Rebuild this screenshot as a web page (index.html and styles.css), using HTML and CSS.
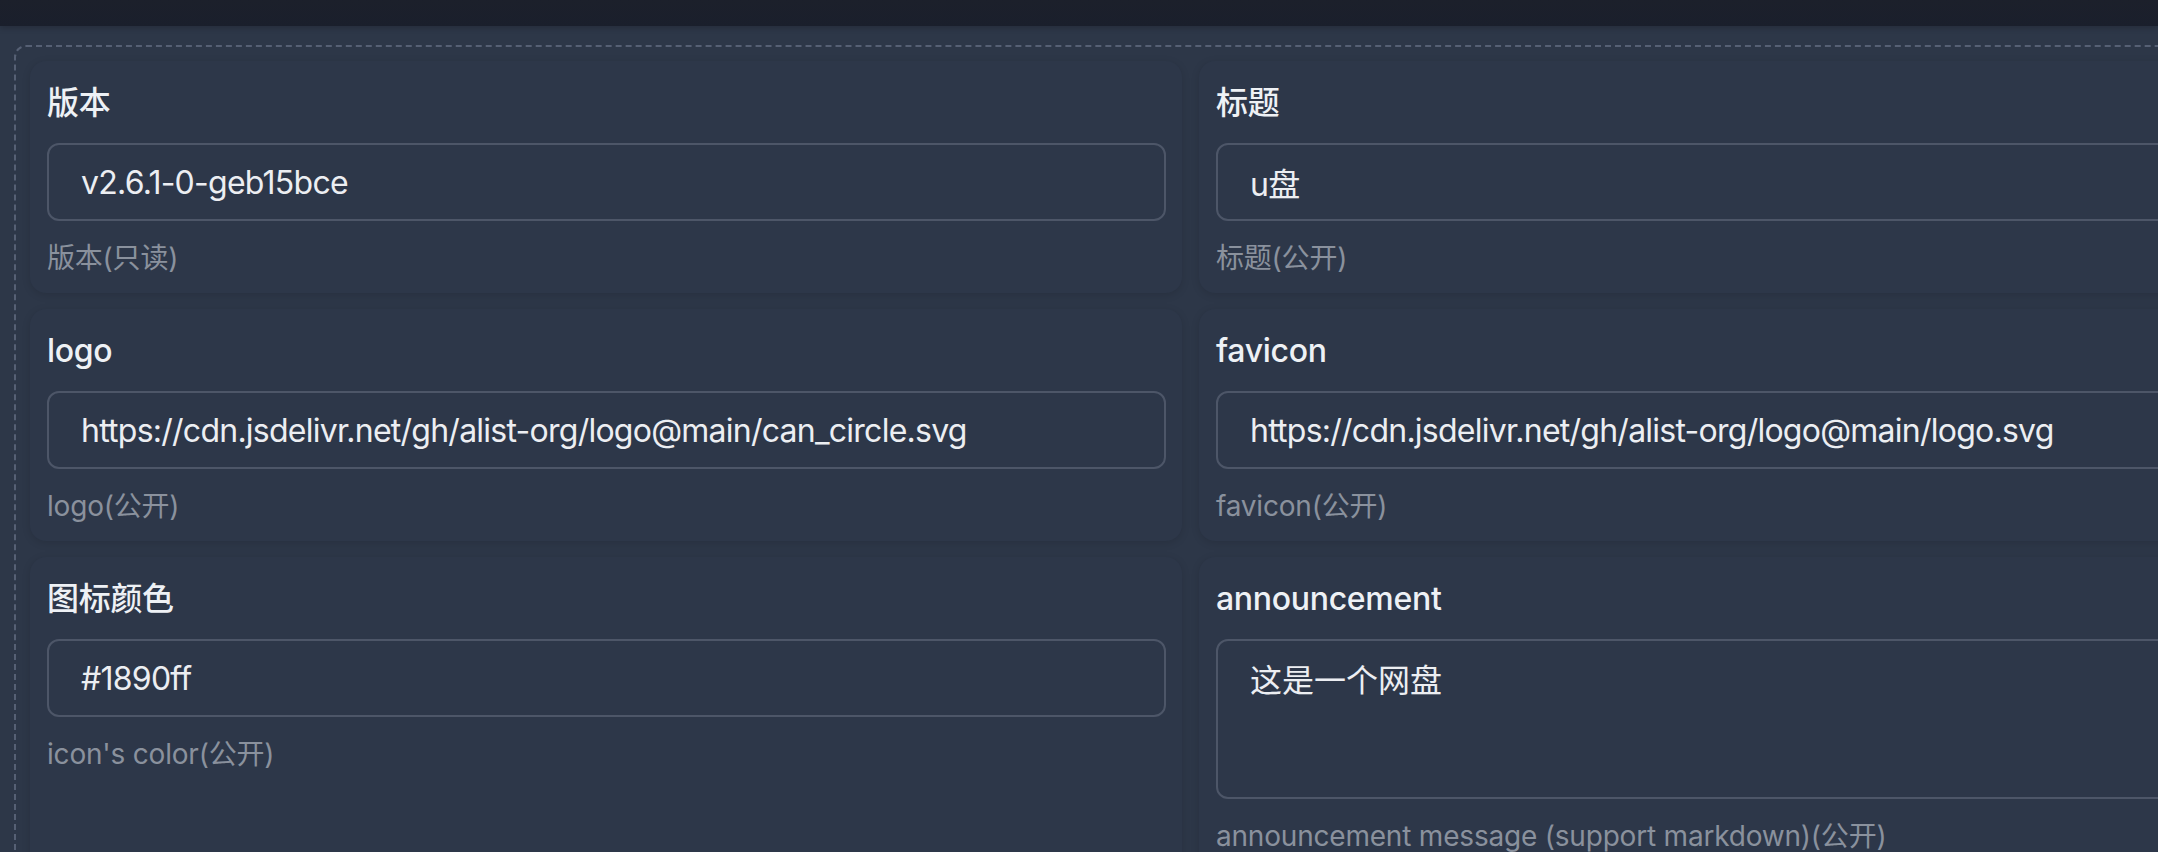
FILE: index.html
```html
<!DOCTYPE html>
<html lang="zh-CN">
<head>
<meta charset="utf-8">
<title>设置</title>
<link rel="stylesheet" href="styles.css">
</head>
<body>
<header class="topbar"></header>
<main class="panel">
  <div class="grid">
    <section class="card">
      <label class="label" for="f-version">版本</label>
      <input class="field" id="f-version" type="text" value="v2.6.1-0-geb15bce" readonly>
      <p class="help">版本(只读)</p>
    </section>
    <section class="card">
      <label class="label" for="f-title">标题</label>
      <input class="field" id="f-title" type="text" value="u盘">
      <p class="help">标题(公开)</p>
    </section>
    <section class="card">
      <label class="label" for="f-logo">logo</label>
      <input class="field" id="f-logo" type="text" value="https://cdn.jsdelivr.net/gh/alist-org/logo@main/can_circle.svg">
      <p class="help">logo(公开)</p>
    </section>
    <section class="card">
      <label class="label" for="f-favicon">favicon</label>
      <input class="field" id="f-favicon" type="text" value="https://cdn.jsdelivr.net/gh/alist-org/logo@main/logo.svg">
      <p class="help">favicon(公开)</p>
    </section>
    <section class="card">
      <label class="label" for="f-color">图标颜色</label>
      <input class="field" id="f-color" type="text" value="#1890ff">
      <p class="help">icon's color(公开)</p>
    </section>
    <section class="card">
      <label class="label" for="f-ann">announcement</label>
      <textarea class="field area" id="f-ann">这是一个网盘</textarea>
      <p class="help">announcement message (support markdown)(公开)</p>
    </section>
  </div>
</main>
</body>
</html>
```
FILE: styles.css
```css
html, body {
  margin: 0;
  padding: 0;
  overflow: hidden;
  background: #2d3748;
  font-family: Inter, "Noto Sans CJK SC", sans-serif;
  color: #edf0f4;
}

.topbar {
  height: 26px;
  background: linear-gradient(180deg, #1c202b 0%, #1a1f2c 100%);
  box-shadow: 0 2px 6px rgba(0, 0, 0, 0.2);
}

.panel {
  margin: 19px 0 0 14px;
  width: 2400px;
  border: 2px dashed #566074;
  border-radius: 12px;
  padding: 14px;
  box-sizing: border-box;
}

.grid {
  display: grid;
  grid-template-columns: 1152px 1152px;
  column-gap: 17px;
  row-gap: 16px;
}

.card {
  background: #2d3749;
  border-radius: 16px;
  padding: 18px 16px 14px 17px;
  box-shadow: 0 2px 8px rgba(0, 0, 0, 0.12);
  display: flex;
  flex-direction: column;
}

.label {
  font-size: 32px;
  line-height: 48px;
  font-weight: 500;
  letter-spacing: -0.3px;
  color: #eef1f5;
  margin-bottom: 16px;
}

.field {
  display: block;
  box-sizing: border-box;
  width: 100%;
  height: 78px;
  margin: 0;
  padding: 0 32px;
  border: 2px solid #4d5668;
  border-radius: 12px;
  background: transparent;
  color: #eceef2;
  font-family: Inter, "Noto Sans CJK SC", sans-serif;
  font-size: 32px;
  line-height: 48px;
  letter-spacing: -0.75px;
  outline: none;
}

.area {
  height: 160px;
  padding: 16px 32px;
  letter-spacing: 0;
  resize: none;
}

.help {
  margin: 16px 0 0;
  font-size: 28px;
  line-height: 42px;
  letter-spacing: -0.2px;
  color: #8a919d;
}
```
